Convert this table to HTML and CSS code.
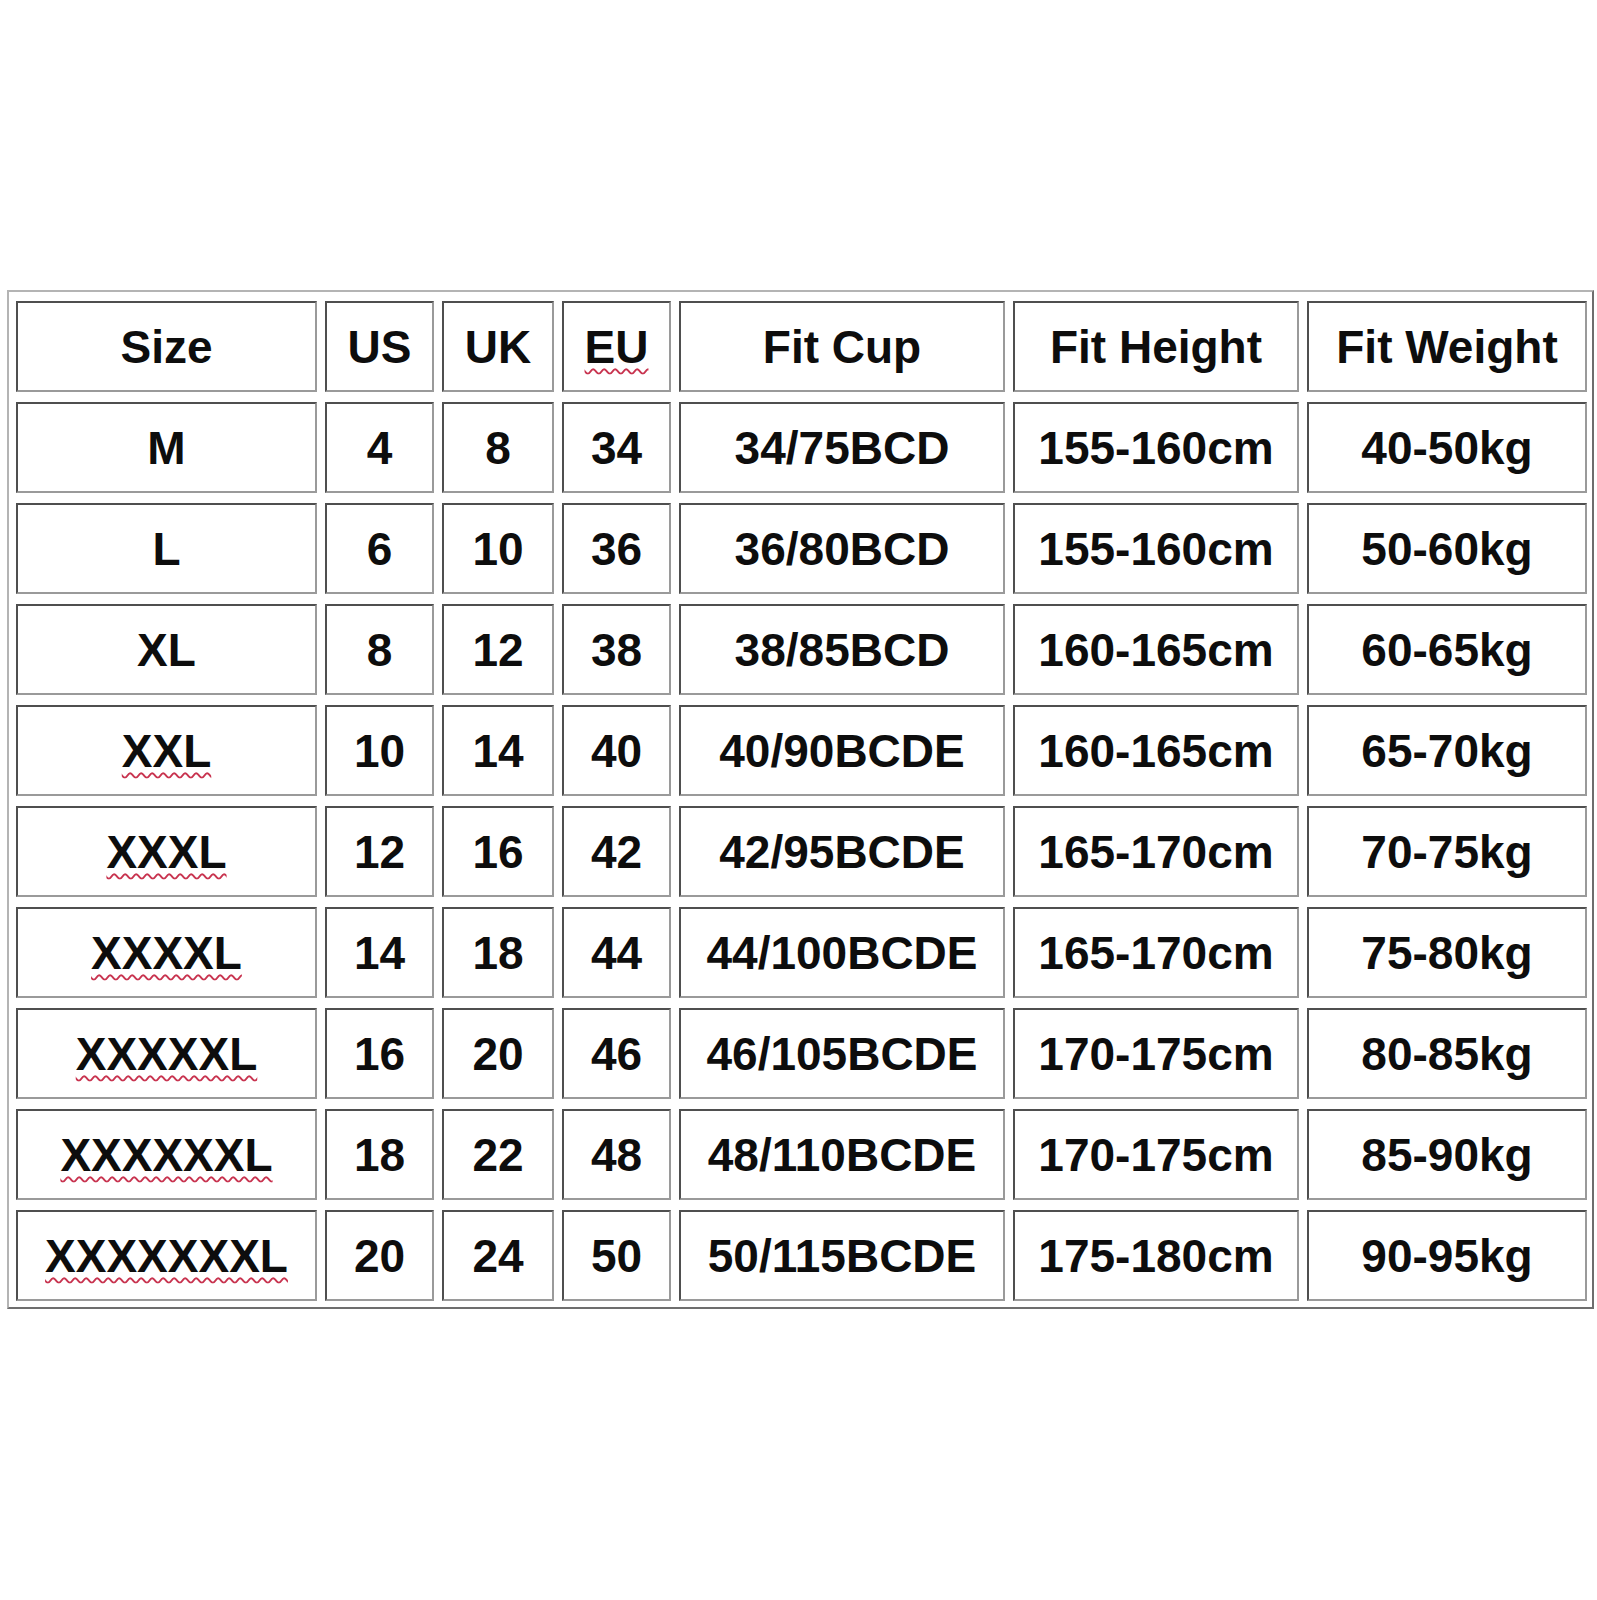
FILE: index.html
```html
<!DOCTYPE html>
<html lang="en">
<head>
<meta charset="utf-8">
<title>Size Chart</title>
<link rel="stylesheet" href="styles.css">
</head>
<body>
<div class="chart">
  <div class="grid">
    <div class="cell">Size</div>
    <div class="cell">US</div>
    <div class="cell">UK</div>
    <div class="cell"><span class="sp">EU</span></div>
    <div class="cell">Fit Cup</div>
    <div class="cell">Fit Height</div>
    <div class="cell">Fit Weight</div>

    <div class="cell">M</div>
    <div class="cell">4</div>
    <div class="cell">8</div>
    <div class="cell">34</div>
    <div class="cell">34/75BCD</div>
    <div class="cell">155-160cm</div>
    <div class="cell">40-50kg</div>

    <div class="cell">L</div>
    <div class="cell">6</div>
    <div class="cell">10</div>
    <div class="cell">36</div>
    <div class="cell">36/80BCD</div>
    <div class="cell">155-160cm</div>
    <div class="cell">50-60kg</div>

    <div class="cell">XL</div>
    <div class="cell">8</div>
    <div class="cell">12</div>
    <div class="cell">38</div>
    <div class="cell">38/85BCD</div>
    <div class="cell">160-165cm</div>
    <div class="cell">60-65kg</div>

    <div class="cell"><span class="sp">XXL</span></div>
    <div class="cell">10</div>
    <div class="cell">14</div>
    <div class="cell">40</div>
    <div class="cell">40/90BCDE</div>
    <div class="cell">160-165cm</div>
    <div class="cell">65-70kg</div>

    <div class="cell"><span class="sp">XXXL</span></div>
    <div class="cell">12</div>
    <div class="cell">16</div>
    <div class="cell">42</div>
    <div class="cell">42/95BCDE</div>
    <div class="cell">165-170cm</div>
    <div class="cell">70-75kg</div>

    <div class="cell"><span class="sp">XXXXL</span></div>
    <div class="cell">14</div>
    <div class="cell">18</div>
    <div class="cell">44</div>
    <div class="cell">44/100BCDE</div>
    <div class="cell">165-170cm</div>
    <div class="cell">75-80kg</div>

    <div class="cell"><span class="sp">XXXXXL</span></div>
    <div class="cell">16</div>
    <div class="cell">20</div>
    <div class="cell">46</div>
    <div class="cell">46/105BCDE</div>
    <div class="cell">170-175cm</div>
    <div class="cell">80-85kg</div>

    <div class="cell"><span class="sp">XXXXXXL</span></div>
    <div class="cell">18</div>
    <div class="cell">22</div>
    <div class="cell">48</div>
    <div class="cell">48/110BCDE</div>
    <div class="cell">170-175cm</div>
    <div class="cell">85-90kg</div>

    <div class="cell"><span class="sp">XXXXXXXL</span></div>
    <div class="cell">20</div>
    <div class="cell">24</div>
    <div class="cell">50</div>
    <div class="cell">50/115BCDE</div>
    <div class="cell">175-180cm</div>
    <div class="cell">90-95kg</div>
  </div>
</div>
</body>
</html>
```

FILE: styles.css
```css
html, body {
  margin: 0;
  padding: 0;
  background: #ffffff;
}

body {
  width: 1597px;
  height: 1600px;
  font-family: "Liberation Sans", Arial, sans-serif;
  color: #0d0d0d;
}

.chart {
  margin: 290px 0 0 7px;
  width: 1571px;
  padding: 9px 5px 6px 7px;
  border: 2px solid;
  border-color: #b4b4b4 #6e6e6e #6e6e6e #b4b4b4;
}

.grid {
  display: grid;
  grid-template-columns: 301px 109px 112px 109px 326px 286px 280px;
  grid-auto-rows: 91px;
  column-gap: 8px;
  row-gap: 10px;
}

.cell {
  box-sizing: border-box;
  display: flex;
  align-items: center;
  justify-content: center;
  border: 2px solid;
  border-color: #4f4f4f #9a9a9a #9a9a9a #4f4f4f;
  font-size: 46px;
  font-weight: bold;
  white-space: nowrap;
}

.sp {
  text-decoration: underline wavy #c8334f;
  text-decoration-thickness: 2px;
  text-underline-offset: 5px;
}
```
